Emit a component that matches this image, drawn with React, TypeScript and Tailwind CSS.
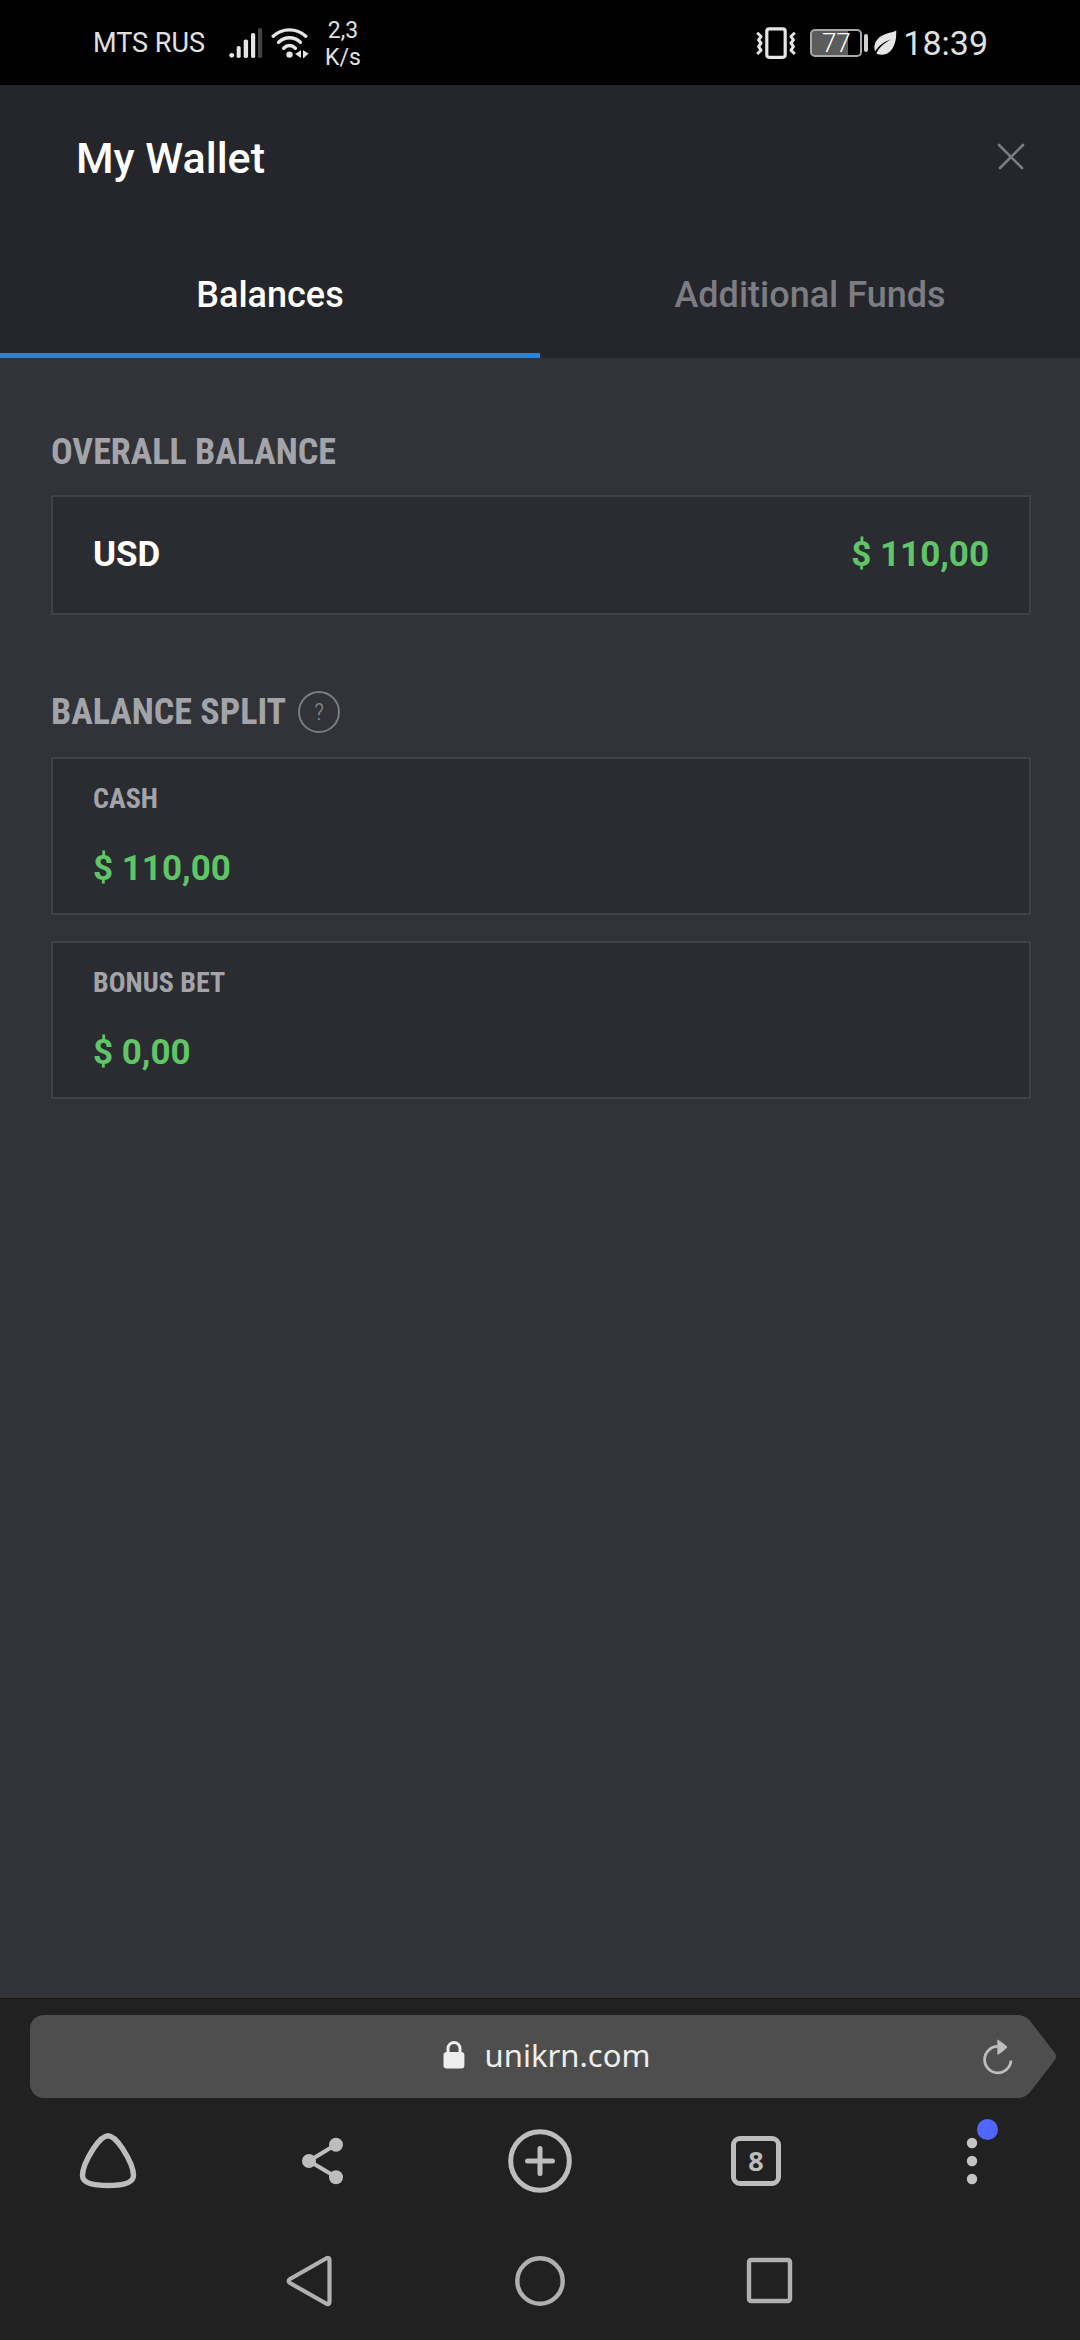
import { ReactNode } from "react"

const splits = [
  { label: "Cash", amount: "$ 110,00" },
  { label: "Bonus bet", amount: "$ 0,00" },
]

const condensed = "font-['Roboto_Condensed','Liberation_Sans_Narrow',sans-serif]"

const SignalIcon = () => (
  <svg width="34" height="32" viewBox="0 0 34 32" fill="#e6e6e6">
    <circle cx="2.7" cy="28.3" r="2.4" />
    <rect x="7.7" y="19" width="4" height="12" rx="1.8" />
    <rect x="14.7" y="12.5" width="4.4" height="18.5" rx="1.8" />
    <rect x="22" y="6" width="4.2" height="25" rx="1.8" />
    <rect x="29" y="1" width="4.2" height="30" rx="1.8" fill="#444" />
  </svg>
)

const WifiIcon = () => (
  <svg width="38" height="32" viewBox="0 0 38 32" fill="none">
    <g stroke="#e6e6e6" strokeWidth="3.4" strokeLinecap="round">
      <path d="M2.2 9.2C11.4.7 25.4.7 34.8 9.2" />
      <path d="M7.6 15.3C14 9.3 23 9.3 29.4 15.3" />
      <path d="M12.7 21.2C16.2 17.6 20.8 17.6 24.4 21.2" />
    </g>
    <circle cx="18.5" cy="27.6" r="3.2" fill="#e6e6e6" />
    <path d="M30 23.2V31L24.2 27.1ZM32 23.2L37.6 26.4 32.8 31H32Z" fill="#e6e6e6" />
  </svg>
)

const VibrateIcon = () => (
  <svg width="40" height="32" viewBox="0 0 40 32" fill="none" stroke="#e6e6e6">
    <rect x="10.8" y="1.9" width="18.4" height="28.4" rx="2.5" strokeWidth="3.2" />
    <path
      d="M1.2 5.8L5 9.5 2.6 13 5 16.2 2.6 19.6 5 23.2 1.2 27M38.8 5.8L35 9.5 37.4 13 35 16.2 37.4 19.6 35 23.2 38.8 27"
      strokeWidth="3"
      strokeLinejoin="round"
    />
  </svg>
)

const LeafIcon = () => (
  <svg width="23" height="26" viewBox="0 0 23 26">
    <path
      d="M22.3.6C17 3.3 9 3.3 3.8 9 .2 13-.2 17 1 21.6 5 15.5 10 11.5 17.5 9.3 11 12.5 5.2 17 2.3 23.6 7 25.7 13 25.3 17.2 20.3 22 14.2 22.2 8 22.3.6Z"
      fill="#e6e6e6"
    />
  </svg>
)

const StatusBar = () => (
  <div className="flex h-[85px] items-center bg-black pr-[92px] pl-[93px] text-[#e0e0e0]">
    <span className="mr-6 text-[27px] leading-8">MTS RUS</span>
    <SignalIcon />
    <div className="w-2" />
    <WifiIcon />
    <div className="ml-4 pt-[2px] text-center text-[23px] leading-[27px]">
      <div>2,3</div>
      <div>K/s</div>
    </div>
    <div className="ml-auto flex items-center">
      <VibrateIcon />
      <div className="ml-[14px] flex h-7 w-[52px] items-center justify-center rounded-[5px] border-2 border-[#a8a8a8] bg-linear-to-r from-[#5c5c5c] from-75% to-black to-75% text-[26px] leading-6 font-light text-white">
        77
      </div>
      <div className="mr-[6px] ml-[2px] h-[18px] w-1 rounded-sm bg-[#d0d0d0]" />
      <LeafIcon />
      <span className="ml-[6px] text-[34px] leading-10">18:39</span>
    </div>
  </div>
)

const Header = () => (
  <header className="bg-[#25262b]">
    <div className="flex h-36 items-center justify-between pt-[2px] pr-[54px] pl-[76px]">
      <h1 className="text-[43px] leading-[48px] font-medium text-white">My Wallet</h1>
      <button aria-label="Close">
        <svg width="30" height="30" viewBox="0 0 30 30" fill="none" stroke="#7b7d83" strokeWidth="2.6" strokeLinecap="round">
          <path d="M3 2L26 25M27 2L4 25" />
        </svg>
      </button>
    </div>
    <div role="tablist" className="grid h-[129px] grid-cols-2 text-[36px] leading-10 font-medium">
      <button role="tab" aria-selected="true" className="border-b-5 border-[#1f87df] pt-2 text-white">
        Balances
      </button>
      <button role="tab" aria-selected="false" className="border-b-5 border-transparent pt-2 text-[#7b7d83]">
        Additional Funds
      </button>
    </div>
  </header>
)

const SectionTitle = ({ children }: { children: ReactNode }) => (
  <h2 className={`${condensed} text-[36px] leading-[42px] font-bold text-[#a3a4a9] uppercase`}>
    {children}
  </h2>
)

const Balances = () => (
  <main className="flex-1 bg-[#323338] pt-[73px] pr-[49px] pb-10 pl-[51px]">
    <SectionTitle>Overall balance</SectionTitle>
    <div className="mt-[22px] flex h-[120px] items-center justify-between border-2 border-[#404146] bg-[#2b2c31] px-10 text-[35px] leading-10 font-bold">
      <span className="text-white">USD</span>
      <span className="text-[#5fc566]">$ 110,00</span>
    </div>

    <div className="mt-[76px] flex items-center gap-3">
      <SectionTitle>Balance split</SectionTitle>
      <button
        aria-label="About the balance split"
        className={`${condensed} flex size-[42px] items-center justify-center rounded-full border-2 border-[#7b7d83] text-[24px] leading-6 font-light text-[#8b8d92]`}
      >
        ?
      </button>
    </div>
    <div className="mt-6 flex flex-col gap-[26px]">
      {splits.map(({ label, amount }) => (
        <div key={label} className="border-2 border-[#404146] bg-[#2b2c31] px-10 pt-6 pb-6">
          <div className={`${condensed} text-[28px] leading-8 font-bold text-[#a3a4a9] uppercase`}>
            {label}
          </div>
          <div className="mt-[34px] text-[35px] leading-10 font-bold text-[#5fc566]">{amount}</div>
        </div>
      ))}
    </div>
  </main>
)

const AddressBar = () => (
  <div className="flex h-[83px] pr-6 pl-[30px]">
    <div className="flex flex-1 items-center rounded-l-[14px] bg-[#4e4e4e]">
      <a
        href="#unikrn"
        className="ml-20 flex flex-1 items-center justify-center gap-5 pb-1 font-['Noto_Sans',sans-serif] text-[31px] leading-10 text-[#eee]"
      >
        <svg width="22" height="28" viewBox="0 0 22 28" fill="#eee">
          <path
            fillRule="evenodd"
            d="M3.5 11V7.5a7.5 7.5 0 0 1 15 0V11c1.9.2 2.9 1.2 2.9 3v10.5c0 2-1 3-3 3H3.5c-2 0-3-1-3-3V14c0-1.8 1-2.8 3-3ZM6.5 11h9V7.5a4.5 4.5 0 0 0-9 0Z"
          />
        </svg>
        <span>unikrn.com</span>
      </a>
      <button aria-label="Reload">
        <svg width="30" height="36" viewBox="0 0 30 36">
          <path d="M28 21.5A13.2 13.2 0 1 1 14.8 7.4" fill="none" stroke="#bdbdbd" strokeWidth="2.8" />
          <path d="M14.3.5C15 .3 23.5 6.5 24.3 8c-.5 1.5-8.5 8-10 7.8Z" fill="#bdbdbd" />
        </svg>
      </button>
    </div>
    <svg width="43" height="83" viewBox="0 0 43 83" fill="#4e4e4e">
      <path d="M0 0H4C10 0 14 2 18 7L41.5 37.5C43.5 40.3 43.5 42.7 41.5 45.5L18 76C14 81 10 83 4 83H0Z" />
    </svg>
  </div>
)

const Toolbar = () => (
  <div className="grid h-[124px] grid-cols-5 place-items-center pt-[2px]">
    <button aria-label="Home">
      <svg width="58" height="58" viewBox="0 0 58 58" fill="none" stroke="#bdbdbd" strokeWidth="5.4">
        <path d="M29 3.7C34 3.7 38.5 9 43.5 16.5 49 25 54.5 36 54.5 43.5 54.5 51.5 43 53.5 29 53.5S3.5 51.5 3.5 43.5C3.5 36 9 25 14.5 16.5 19.5 9 24 3.7 29 3.7Z" />
      </svg>
    </button>
    <button aria-label="Share">
      <svg width="44" height="48" viewBox="0 0 44 48" fill="#bdbdbd">
        <path d="M34 7.5L7 24 34 40" fill="none" stroke="#bdbdbd" strokeWidth="4" />
        <circle cx="34" cy="7.8" r="7" />
        <circle cx="7" cy="24" r="7" />
        <circle cx="34" cy="40.2" r="7" />
      </svg>
    </button>
    <button aria-label="New tab">
      <svg width="64" height="64" viewBox="0 0 64 64" fill="none" stroke="#bdbdbd" strokeWidth="5" strokeLinecap="round">
        <circle cx="32" cy="32" r="29.3" />
        <path d="M32 19.5V44.5M19.5 32H44.5" />
      </svg>
    </button>
    <button
      aria-label="Open tabs"
      className="flex size-[50px] items-center justify-center rounded-[9px] border-5 border-[#bdbdbd] font-['Noto_Sans',sans-serif] text-[27px] leading-8 font-bold text-[#bdbdbd]"
    >
      8
    </button>
    <button aria-label="Menu" className="relative">
      <svg width="12" height="48" viewBox="0 0 12 48" fill="#c4c4c4">
        <circle cx="6" cy="6" r="5.2" />
        <circle cx="6" cy="24" r="5.2" />
        <circle cx="6" cy="42" r="5.2" />
      </svg>
      <span className="absolute -top-[18px] left-[11px] size-[21px] rounded-full bg-[#4f66ff]" />
    </button>
  </div>
)

const SystemNav = () => (
  <div className="flex h-[118px] items-center justify-center gap-[180px]">
    <button aria-label="Back">
      <svg width="50" height="52" viewBox="0 0 50 52" fill="none" stroke="#b0b0b0" strokeWidth="4.2" strokeLinejoin="round">
        <path d="M41.5 3.2C43.5 2.4 44.5 3 44.500 5V47C44.500 49 43.500 49.600 41.500 48.800L5 28C3.200 26.700 3.200 25.300 5 24Z" />
      </svg>
    </button>
    <button aria-label="Home screen">
      <svg width="50" height="50" viewBox="0 0 50 50" fill="none" stroke="#b0b0b0" strokeWidth="4.4">
        <circle cx="25" cy="25" r="22.7" />
      </svg>
    </button>
    <button aria-label="Recent apps">
      <svg width="50" height="50" viewBox="0 0 50 50" fill="none" stroke="#b0b0b0" strokeWidth="4.4">
        <rect x="4" y="4" width="41" height="41" rx="2" />
      </svg>
    </button>
  </div>
)

const App = () => {
  return (
    <div className="flex min-h-screen flex-col bg-[#212121] font-[Roboto,sans-serif]">
      <StatusBar />
      <Header />
      <Balances />
      <footer className="border-t border-[#18181a] pt-4">
        <AddressBar />
        <Toolbar />
        <SystemNav />
      </footer>
    </div>
  )
}
export default App
